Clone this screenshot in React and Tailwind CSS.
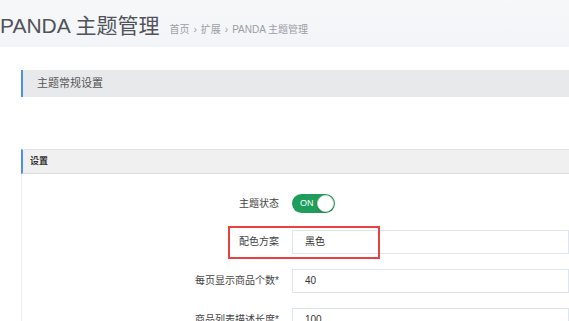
export default function App() {
  const font = { fontFamily: '"Liberation Sans", "Noto Sans CJK SC", sans-serif' };
  return (
    <div className="w-[569px] h-[321px] overflow-hidden bg-white text-[#555]" style={font}>
      <div className="h-[47px] bg-gradient-to-b from-[#f7f8fa] to-[#f3f4f7] flex items-end pb-[8px]">
        <div className="text-[21px] leading-[26px] text-[#505359] whitespace-nowrap">PANDA 主题管理</div>
        <div className="ml-[10px] mb-[2px] text-[10px] leading-[14px] text-[#9a9ea6] whitespace-nowrap flex items-center gap-[4px]">
          <span>首页</span>
          <span>›</span>
          <span>扩展</span>
          <span>›</span>
          <span>PANDA 主题管理</span>
        </div>
      </div>

      <div className="mt-[23px] ml-[21px] h-[27px] bg-[#e8e9eb] border-l-[2px] border-[#4d8ef0] flex items-center pl-[14px]">
        <span className="text-[11px] text-[#555]">主题常规设置</span>
      </div>

      <div className="mt-[52px] ml-[21px] h-[25px] bg-[#f0f0f0] border-t border-b border-t-[#e2e2e2] border-b-[#dcdcdc] border-l-[2px] border-l-[#4d8ef0] flex items-center pl-[7px]">
        <span className="text-[9px] font-bold text-[#333]">设置</span>
      </div>

      <div className="ml-[21px] border-l border-[#eeeeee] pt-[10px] flex flex-col">
        <div className="h-[38px] flex items-center">
          <div className="w-[257px] text-right text-[10px] text-[#444]">主题状态</div>
          <div className="ml-[13px]">
            <div className="w-[43px] h-[19px] rounded-full bg-[#1e9e5a] flex items-center justify-between pl-[8px] pr-[1px]">
              <span className="text-[9px] text-white leading-none">ON</span>
              <span className="w-[17px] h-[17px] rounded-full bg-white border border-[#dcdcdc] shadow-[0_1px_2px_rgba(0,0,0,0.2)]"></span>
            </div>
          </div>
        </div>

        <div className="h-[39px] flex items-center relative">
          <div className="w-[257px] text-right text-[10px] text-[#444]">配色方案</div>
          <div className="ml-[13px] flex-1 h-[24px] border border-[#dfe5ee] flex items-center pl-[12px] text-[10px] text-[#333]">黑色</div>
          <div className="absolute left-[206px] top-[4px] w-[152px] h-[33px] border-[2px] border-[#e84141] pointer-events-none"></div>
        </div>

        <div className="h-[39px] flex items-center">
          <div className="w-[257px] text-right text-[10px] text-[#444]">每页显示商品个数*</div>
          <div className="ml-[13px] flex-1 h-[24px] border border-[#dfe5ee] flex items-center pl-[12px] text-[10px] text-[#333]">40</div>
        </div>

        <div className="h-[39px] flex items-center">
          <div className="w-[257px] text-right text-[10px] text-[#444]">商品列表描述长度*</div>
          <div className="ml-[13px] flex-1 h-[24px] border border-[#dfe5ee] flex items-center pl-[12px] text-[10px] text-[#333]">100</div>
        </div>
      </div>
    </div>
  );
}
